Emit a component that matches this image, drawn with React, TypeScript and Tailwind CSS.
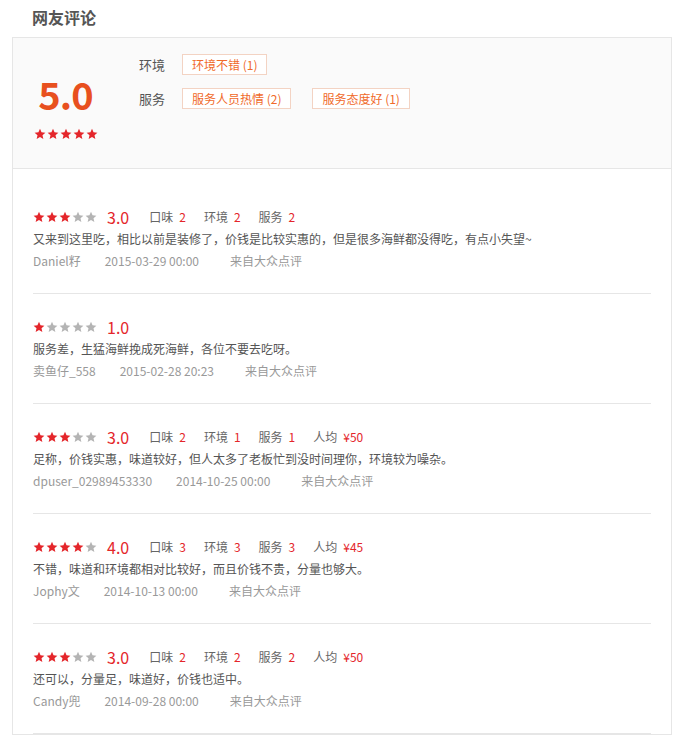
import React from "react";

type Review = {
  score: number;
  sub: { label: string; value: string }[];
  text: string;
  user: string;
  date: string;
};

const reviews: Review[] = [
  {
    score: 3,
    sub: [
      { label: "口味", value: "2" },
      { label: "环境", value: "2" },
      { label: "服务", value: "2" },
    ],
    text: "又来到这里吃，相比以前是装修了，价钱是比较实惠的，但是很多海鲜都没得吃，有点小失望~",
    user: "Daniel籽",
    date: "2015-03-29 00:00",
  },
  {
    score: 1,
    sub: [],
    text: "服务差，生猛海鲜挽成死海鲜，各位不要去吃呀。",
    user: "卖鱼仔_558",
    date: "2015-02-28 20:23",
  },
  {
    score: 3,
    sub: [
      { label: "口味", value: "2" },
      { label: "环境", value: "1" },
      { label: "服务", value: "1" },
      { label: "人均", value: "¥50" },
    ],
    text: "足称，价钱实惠，味道较好，但人太多了老板忙到没时间理你，环境较为噪杂。",
    user: "dpuser_02989453330",
    date: "2014-10-25 00:00",
  },
  {
    score: 4,
    sub: [
      { label: "口味", value: "3" },
      { label: "环境", value: "3" },
      { label: "服务", value: "3" },
      { label: "人均", value: "¥45" },
    ],
    text: "不错，味道和环境都相对比较好，而且价钱不贵，分量也够大。",
    user: "Jophy文",
    date: "2014-10-13 00:00",
  },
  {
    score: 3,
    sub: [
      { label: "口味", value: "2" },
      { label: "环境", value: "2" },
      { label: "服务", value: "2" },
      { label: "人均", value: "¥50" },
    ],
    text: "还可以，分量足，味道好，价钱也适中。",
    user: "Candy兜",
    date: "2014-09-28 00:00",
  },
];

function Star({ on }: { on: boolean }) {
  return (
    <svg width="12" height="12" viewBox="0 0 24 24" className="shrink-0">
      <path
        d="M12 1.5l3.1 7.1 7.7.7-5.8 5.1 1.7 7.6L12 18l-6.7 4 1.7-7.6-5.8-5.1 7.7-.7z"
        fill={on ? "#e4262b" : "#b4b4b4"}
      />
    </svg>
  );
}

function Stars({ n }: { n: number }) {
  return (
    <div className="flex items-center gap-px">
      {[1, 2, 3, 4, 5].map((i) => (
        <Star key={i} on={i <= n} />
      ))}
    </div>
  );
}

function Tag({ children }: { children: React.ReactNode }) {
  return (
    <span className="h-[21px] px-[9px] border border-[#f3d3c3] bg-white text-[#f06a2a] text-[12px] leading-[19px]">
      {children}
    </span>
  );
}

export default function App() {
  return (
    <div
      className="w-[688px] bg-white text-[12px]"
      style={{ fontFamily: '"Noto Sans CJK SC", "Liberation Sans", sans-serif' }}
    >
      {/* title */}
      <h2 className="pl-[32px] h-[37px] leading-[34px] text-[16px] font-bold text-[#555]">
        网友评论
      </h2>

      <div className="ml-[12px] w-[660px] border border-[#e6e6e6]">
        {/* summary */}
        <div className="h-[131px] bg-[#fafafa] border-b border-[#e6e6e6] flex">
          <div className="w-[85px] pl-[20px] pt-[35px] flex flex-col items-center">
            <div className="text-[38px] leading-[42px] font-bold text-[#e8501e] tracking-tight">
              5.0
            </div>
            <div className="mt-[13px]">
              <Stars n={5} />
            </div>
          </div>
          <div className="pl-[41px] pt-[16px] flex flex-col gap-[13px]">
            <div className="flex items-center">
              <span className="w-[43px] text-[13px] text-[#555]">环境</span>
              <Tag>环境不错 (1)</Tag>
            </div>
            <div className="flex items-center gap-[21px]">
              <div className="flex items-center">
                <span className="w-[43px] text-[13px] text-[#555]">服务</span>
                <Tag>服务人员热情 (2)</Tag>
              </div>
              <Tag>服务态度好 (1)</Tag>
            </div>
          </div>
        </div>

        {/* reviews */}
        <div className="px-[20px] pt-[15px]">
          {reviews.map((r, idx) => (
            <div key={idx} className="pt-[21px] pb-[21px] border-b border-[#e6e6e6]">
              <div className="h-[23px] flex items-center">
                <Stars n={r.score} />
                <span className="ml-[10px] text-[16px] text-[#e4262b]">
                  {r.score.toFixed(1)}
                </span>
                {r.sub.length > 0 && (
                  <div className="ml-[20px] flex items-center gap-[18px]">
                    {r.sub.map((s) => (
                      <span key={s.label} className="text-[#666]">
                        {s.label}
                        <span className="ml-[6px] text-[#e4262b]">{s.value}</span>
                      </span>
                    ))}
                  </div>
                )}
              </div>
              <p className="h-[22px] leading-[22px] text-[#555]">{r.text}</p>
              <div className="h-[22px] flex items-center text-[#999]">
                <span className="mr-[24px]">{r.user}</span>
                <span className="mr-[31px]">{r.date}</span>
                <span>来自大众点评</span>
              </div>
            </div>
          ))}
        </div>
      </div>
    </div>
  );
}
